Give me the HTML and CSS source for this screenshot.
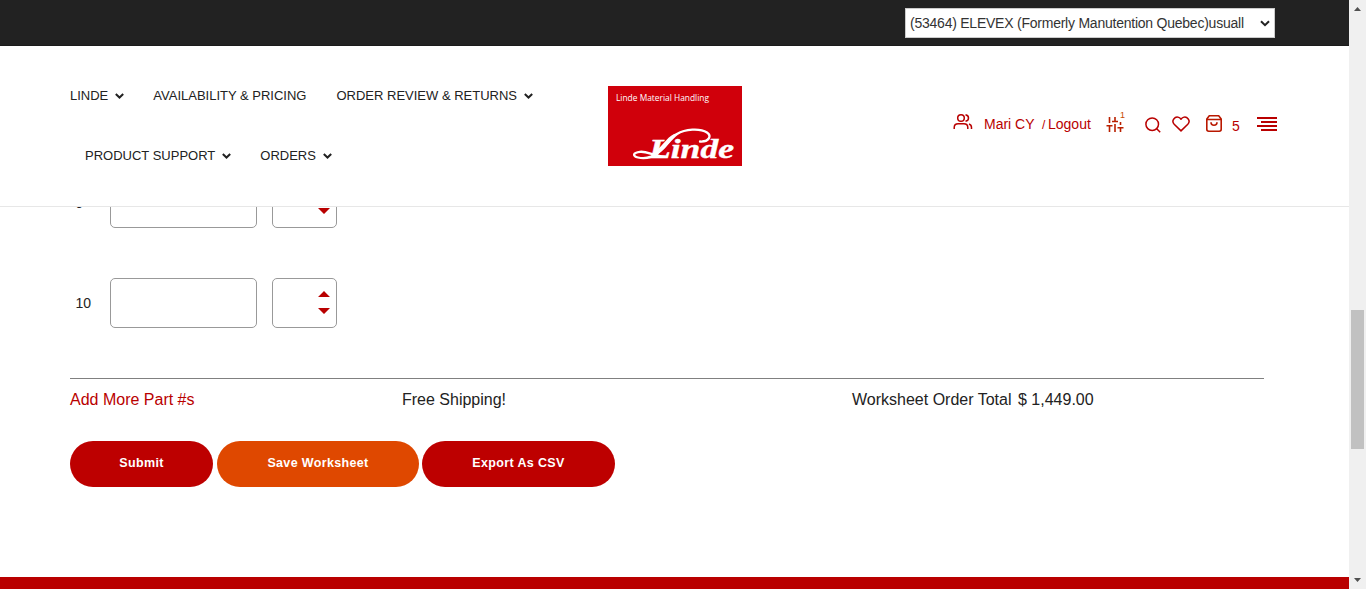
FILE: index.html
```html
<!DOCTYPE html>
<html lang="en">
<head>
<meta charset="utf-8">
<title>Worksheet</title>
<link rel="stylesheet" href="styles.css">
</head>
<body>
<div class="window">
  <div class="page">
    <div class="topbar">
      <div class="account-select"><span>(53464) ELEVEX (Formerly Manutention Quebec)usuall</span>
        <svg width="10" height="7" viewBox="0 0 10 7"><path d="M1 1.2 5 5.2 9 1.2" fill="none" stroke="#222" stroke-width="2"/></svg>
      </div>
    </div>
    <header class="header">
      <nav class="nav">
        <div class="nav-row">
          <a class="nav-item"><span>LINDE</span><svg class="chev" viewBox="0 0 9 6"><path d="M.8 1 4.5 4.5 8.2 1"/></svg></a>
          <a class="nav-item"><span>AVAILABILITY &amp; PRICING</span></a>
          <a class="nav-item nav-review"><span>ORDER REVIEW &amp; RETURNS</span><svg class="chev" viewBox="0 0 9 6"><path d="M.8 1 4.5 4.5 8.2 1"/></svg></a>
        </div>
        <div class="nav-row nav-row-second">
          <a class="nav-item"><span>PRODUCT SUPPORT</span><svg class="chev" viewBox="0 0 9 6"><path d="M.8 1 4.5 4.5 8.2 1"/></svg></a>
          <a class="nav-item"><span>ORDERS</span><svg class="chev" viewBox="0 0 9 6"><path d="M.8 1 4.5 4.5 8.2 1"/></svg></a>
        </div>
      </nav>
      <svg class="logo" viewBox="0 0 134 80">
        <rect width="134" height="80" fill="#d0000b"/>
        <text class="logo-tag" x="8" y="15" textLength="93" lengthAdjust="spacingAndGlyphs">Linde Material Handling</text>
        <text class="logo-name" x="41" y="71.5" textLength="85" lengthAdjust="spacingAndGlyphs">Linde</text>
        <path d="M92 55.500C101 56 104 50 99 46.500C92 42 77 43 69 48C62 53 58 61 51 66C44 71.500 36 73 30 71.500C24 70 25 66.500 32 65.800C40 65 45 70.500 57 70.500" fill="none" stroke="#fff" stroke-width="2.300" stroke-linecap="round"/>
        <path d="M71 47C63 52 60 61 50 68L46 66C54 61 58 52 66 48Z" fill="#fff"/>
      </svg>
      <div class="tools">
        <svg class="i-users" viewBox="0 0 20 18"><g fill="none" stroke="#b90000" stroke-width="1.500"><circle cx="8" cy="5" r="3.300"/><path d="M1.200 16v-1.500q0-3.700 4-3.700h5.600q4 0 4 3.700V16M12.500 1.700c4 .8 4 5.800 0 6.600M16 11q2.500.8 2.500 3.600V16"/></g></svg>
        <span class="t-user">Mari CY</span>
        <span class="t-slash">/</span>
        <span class="t-logout">Logout</span>
        <svg class="i-sliders" viewBox="0 0 18 17"><path d="M3.500 1v6M3.500 10v6M.5 9.700h6M9 1v4M9 8v8M6 5.500h6M14.500 6v3M14.500 12v4M11.500 11.700h6" fill="none" stroke="#b92000" stroke-width="1.600"/></svg>
        <span class="t-one">1</span>
        <svg class="i-search" viewBox="0 0 16 16"><g fill="none" stroke="#b90000" stroke-width="1.500"><circle cx="7.200" cy="7.200" r="6.300"/><path d="m11.700 11.700 3.500 3.500"/></g></svg>
        <svg class="i-heart" viewBox="0 0 18 16"><path d="M9 14.900 2.200 8.200C-1.200 4.600 3 .1 6.700 1.400 7.900 1.800 9 3.200 9 3.200s1.100-1.400 2.300-1.800C15 .1 19.200 4.600 15.800 8.200Z" fill="none" stroke="#b90000" stroke-width="1.500" stroke-linejoin="round"/></svg>
        <svg class="i-bag" viewBox="0 0 16 17"><path d="M3.300.8h9.400L15.200 4v10.300q0 1.900-1.900 1.900H2.700q-1.900 0-1.900-1.900V4ZM.8 4.500h14.400M5 7.300c0 4 6 4 6 0" fill="none" stroke="#b91800" stroke-width="1.600" stroke-linejoin="round"/></svg>
        <span class="t-five">5</span>
        <svg class="i-menu" viewBox="0 0 20 14"><path d="M0 1h20M4 5h16M0 9h20M4 13h16" stroke="#b90000" stroke-width="2"/></svg>
      </div>
    </header>
    <main class="content">
      <div class="row row-clipped">
        <span class="num">9</span><div class="box part"></div>
        <div class="box qty"><svg viewBox="0 0 12 24"><path d="M0 6h12L6 0ZM0 17h12L6 23Z" fill="#b90000"/></svg></div>
      </div>
      <div class="row">
        <span class="num">10</span><div class="box part"></div>
        <div class="box qty"><svg viewBox="0 0 12 24"><path d="M0 6h12L6 0ZM0 17h12L6 23Z" fill="#b90000"/></svg></div>
      </div>
      <div class="summary">
        <a class="add">Add More Part #s</a>
        <span class="ship">Free Shipping!</span>
        <span class="total">Worksheet Order Total</span><span class="amount">$ 1,449.00</span>
      </div>
      <div class="actions">
        <button class="btn submit">Submit</button>
        <button class="btn save">Save Worksheet</button>
        <button class="btn export">Export As CSV</button>
      </div>
    </main>
    <footer class="footer"></footer>
  </div>
  <div class="scrollbar">
    <svg width="7" height="4" viewBox="0 0 7 4"><path d="M0 4h7L3.500 0Z" fill="#505050"/></svg>
    <div class="thumb"></div>
    <svg class="down" width="7" height="4" viewBox="0 0 7 4"><path d="M0 0h7L3.500 4Z" fill="#505050"/></svg>
  </div>
</div>
</body>
</html>
```
FILE: styles.css
```css
* { box-sizing: border-box; }
body { margin: 0; background: #fff; color: #222; font-family: "Liberation Sans", Arial, sans-serif; overflow: hidden; }
svg { display: block; flex: none; }
.window { display: flex; width: 1366px; height: 589px; }
.page { display: flex; flex-direction: column; width: 1349px; height: 589px; }
.topbar { height: 46px; flex: none; background: #222; border-bottom: 1px solid #1b1b1b; display: flex; justify-content: flex-end; padding: 8px 74px 0 0; }
.account-select { width: 370px; height: 30px; background: #fff; border: 1px solid #ccc; display: flex; align-items: center; justify-content: space-between; padding: 0 4px 0 4px; font-size: 14px; letter-spacing: -.235px; color: #333; white-space: nowrap; }
.header { height: 161px; flex: none; border-bottom: 1px solid #e7e7e7; display: flex; align-items: flex-start; padding-left: 70px; }
.nav { width: 538px; padding-top: 19px; font-size: 13px; }
.nav-row { display: flex; height: 60px; align-items: center; gap: 29px; white-space: nowrap; }
.nav-row-second { padding-left: 15px; }
.nav-item { display: flex; align-items: center; gap: 7px; }
.nav-review { margin-left: 1px; }
.chev { width: 9px; height: 6px; margin-top: 2px; fill: none; stroke: #222; stroke-width: 2; }
.logo { width: 134px; height: 80px; margin-top: 40px; }
.logo-tag { font: 9px "Open Sans", sans-serif; fill: #fff; }
.logo-name { font: italic bold 27px "Liberation Serif", serif; fill: #fff; stroke: #fff; stroke-width: .4px; }
.tools { display: flex; align-items: flex-start; margin: 64px 0 0 211px; color: #b90000; font-size: 14px; line-height: 16px; white-space: nowrap; }
.i-users { width: 20px; height: 18px; margin-top: 3px; }
.t-user { width: 58px; margin: 6px 0 0 11px; }
.t-slash { width: 6px; margin-top: 7px; font-size: 12px; }
.t-logout { width: 58px; margin-top: 6px; }
.i-sliders { width: 18px; height: 17px; margin-top: 6px; }
.t-one { width: 21px; margin: -3px 0 0 -4px; font-size: 9px; color: #c84a00; }
.i-search { width: 16px; height: 16px; margin: 7px 0 0 4px; }
.i-heart { width: 18px; height: 16px; margin: 6px 0 0 11px; }
.i-bag { width: 16px; height: 17px; margin: 5px 0 0 16px; }
.t-five { width: 25px; margin: 8px 0 0 10px; }
.i-menu { width: 20px; height: 14px; margin-top: 7px; }
.content { flex: 1; min-height: 0; overflow: hidden; padding-left: 70px; }
.row { display: flex; align-items: center; height: 50px; margin-bottom: 50px; }
.row-clipped { margin-top: -29px; }
.num { width: 40px; padding-left: 5.5px; font-size: 14px; }
.box { height: 50px; border: 1px solid #999; border-radius: 5px; }
.part { width: 147px; margin-right: 15px; }
.qty { width: 65px; padding: 12px 0 0 45px; }
.qty svg { width: 12px; height: 24px; }
.summary { display: flex; width: 1194px; border-top: 1px solid #808080; padding-top: 12px; height: 63px; font-size: 16px; line-height: 18px; }
.add { width: 332px; color: #b90000; }
.ship { width: 450px; }
.total { width: 166px; }
.actions { display: flex; gap: 4px; }
.btn { height: 46px; border: 0; border-radius: 23px; padding: 0 0 2px; background: #bd0000; color: #fff; font: bold 12.5px "Liberation Sans", Arial, sans-serif; letter-spacing: .35px; }
.submit { width: 143px; }
.save { width: 202px; background: #df4800; }
.export { width: 193px; margin-left: -1px; }
.footer { height: 12px; flex: none; background: #b90000; }
.scrollbar { width: 17px; background: #f0f0f0; display: flex; flex-direction: column; align-items: center; padding: 7px 0; }
.thumb { width: 13px; height: 139px; margin-top: 299px; background: #c1c1c1; }
.down { margin-top: auto; }
```
